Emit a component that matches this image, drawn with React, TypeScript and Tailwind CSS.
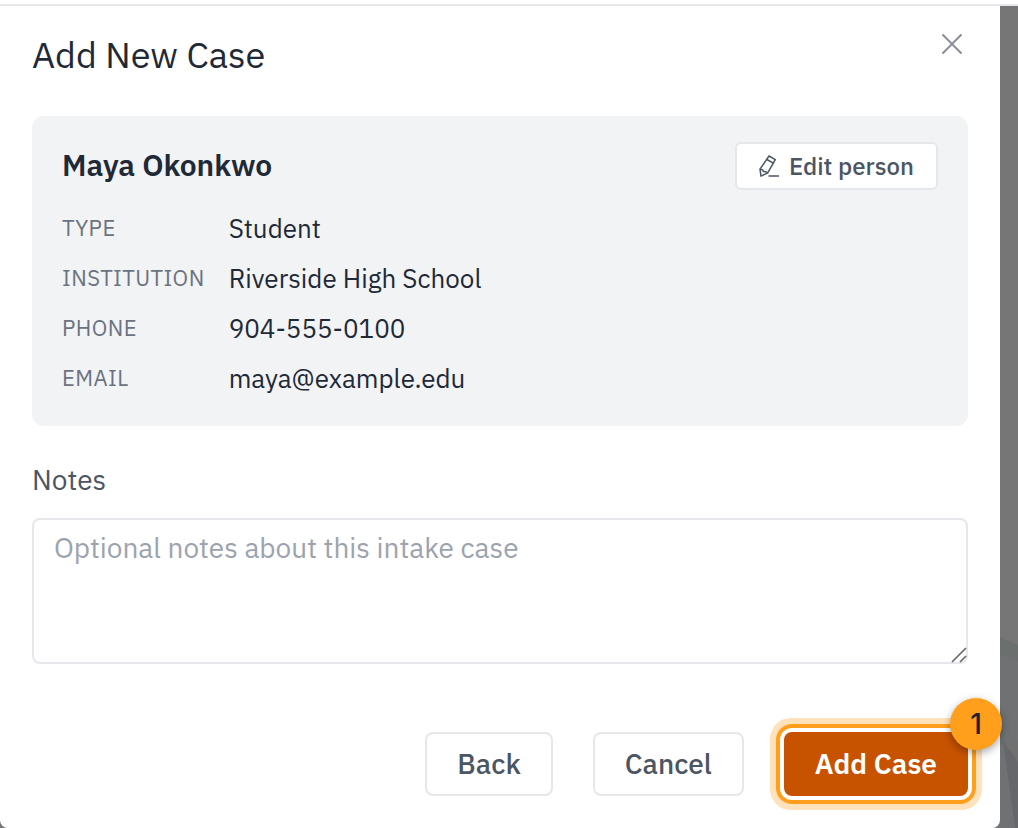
import { useState } from 'react'
import type { ReactNode } from 'react'

const PERSON = {
  name: 'Maya Okonkwo',
  details: [
    { label: 'Type', value: 'Student' },
    { label: 'Institution', value: 'Riverside High School' },
    { label: 'Phone', value: '904-555-0100' },
    { label: 'Email', value: 'maya@example.edu' },
  ],
}

function CloseIcon() {
  return (
    <svg className="size-5" viewBox="0 0 20 20" fill="none" stroke="currentColor" strokeWidth="2" strokeLinecap="round">
      <path d="M1 1l18 18M19 1L1 19" />
    </svg>
  )
}

function PencilIcon() {
  return (
    <svg className="h-[22px] w-5 flex-none" viewBox="0 0 20 22" fill="none" stroke="currentColor" strokeWidth="1.5" strokeLinejoin="round">
      <path d="M10 1l6.300 3.700-7.600 13.200L2 21.200l-1-7z" />
      <path d="M7.900 4.500l6.400 3.700M1 14.500c1.900-.4 3.100.3 3.300 2.100 1.800-.5 3.200 0 4.200 1.400" />
      <path d="M9.500 21h10.500" />
    </svg>
  )
}

// Dimmed artwork of the page behind the dialog
function BackdropArt() {
  return (
    <svg className="absolute right-0 bottom-0" width="18" height="191" viewBox="0 0 18 191">
      <path d="M0 0l18 8v183H0z" fill="#707173" />
      <path d="M0 0l18 8v16L0 17z" fill="#6b6f6e" />
      <path d="M3 104h15v21z" fill="#707070" />
      <path d="M3 104l15 21v66h-3z" fill="#66676b" />
    </svg>
  )
}

function OutlineButton({ children }: { children: ReactNode }) {
  return (
    <button type="button" className="h-16 rounded-lg border-2 border-[#e5e7eb] bg-white px-[30px] text-[28px] font-medium text-[#4b5563]">
      {children}
    </button>
  )
}

export default function App() {
  const [notes, setNotes] = useState('')

  return (
    <div className="flex min-h-screen flex-col bg-white font-['IBM_Plex_Sans',Roboto,sans-serif]">
      <div className="h-1.5 border-b-2 border-[#e5e7eb]" />

      <div className="relative flex-1 bg-[#767676] pr-[18px]">
        <BackdropArt />

        <div role="dialog" aria-labelledby="dialog-title" className="relative rounded-b-lg bg-white px-8 pt-6 pb-8">
          <header className="flex items-start justify-between">
            <h1 id="dialog-title" className="text-[36px] leading-[50px] text-[#1f2937]">Add New Case</h1>
            <button type="button" aria-label="Close" className="p-1.5 pt-1 text-[#8b8f97]">
              <CloseIcon />
            </button>
          </header>

          {/* Person summary */}
          <section className="mt-9 rounded-xl bg-[#f1f3f5] px-[30px] pt-[26px] pb-[29px]">
            <div className="flex items-start justify-between">
              <h2 className="text-[30px] leading-[46px] font-semibold text-[#1f2937]">{PERSON.name}</h2>
              <button
                type="button"
                className="flex h-12 items-center gap-2.5 rounded-md border-2 border-[#e5e7eb] bg-white px-[22px] text-[24px] font-medium text-[#4b5563]"
              >
                <PencilIcon />
                Edit person
              </button>
            </div>
            <dl className="mt-[19px] grid grid-cols-[auto_1fr] gap-x-6 gap-y-3">
              {PERSON.details.map(({ label, value }) => (
                <div key={label} className="contents">
                  <dt className="text-[22px] leading-[38px] tracking-[0.02em] text-[#6b7280] uppercase">{label}</dt>
                  <dd className="text-[26px] leading-[38px] text-[#1f2937]">{value}</dd>
                </div>
              ))}
            </dl>
          </section>

          {/* Notes */}
          <label htmlFor="notes" className="mt-8 block text-[28px] leading-[44px] text-[#4b5563]">Notes</label>
          <div className="relative mt-4">
            <textarea
              id="notes"
              value={notes}
              onChange={e => setNotes(e.target.value)}
              placeholder="Optional notes about this intake case"
              className="block h-[146px] w-full resize-none rounded-lg border-2 border-[#e5e7eb] px-5 py-2 text-[28px] leading-[40px] text-[#1f2937] placeholder:text-[#9ca3af]"
            />
            <svg className="pointer-events-none absolute right-0 bottom-0" width="18" height="18" viewBox="0 0 18 18" stroke="#666" strokeWidth="1.6">
              <path d="M2 16L16 2M10 16l6-6" />
            </svg>
          </div>

          <footer className="mt-[68px] flex justify-end gap-10">
            <OutlineButton>Back</OutlineButton>
            <OutlineButton>Cancel</OutlineButton>
            <div className="relative">
              <button
                type="button"
                className="h-16 rounded-lg bg-[#c75300] px-[31px] text-[28px] font-semibold text-white shadow-[0_0_0_4px_#fff,0_0_0_8px_#ff9f1c,0_0_0_14px_#ffe2bb]"
              >
                Add Case
              </button>
              <span className="absolute -top-[34px] -right-[34px] flex size-[52px] items-center justify-center rounded-full bg-[#ff9f1c] font-[Inter,sans-serif] text-[28px] font-medium text-[#222] shadow-[0_3px_8px_rgba(0,0,0,0.35)]">
                1
              </span>
            </div>
          </footer>
        </div>
      </div>
    </div>
  )
}
